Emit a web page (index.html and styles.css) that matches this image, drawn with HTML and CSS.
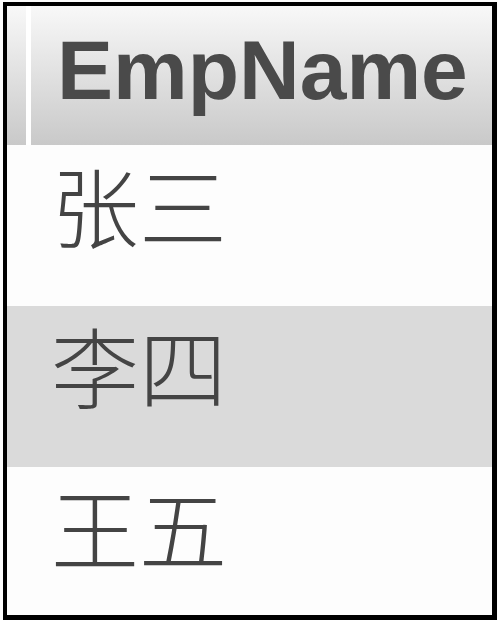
FILE: index.html
```html
<!DOCTYPE html>
<html lang="zh-CN">
<head>
  <meta charset="UTF-8">
  <title>EmpName</title>
  <link rel="stylesheet" href="styles.css">
</head>
<body>
  <div class="grid">
    <div class="head">
      <div class="corner"></div>
      <div class="col-title">EmpName</div>
    </div>
    <div class="row">张三</div>
    <div class="row alt">李四</div>
    <div class="row">王五</div>
  </div>
</body>
</html>
```

FILE: styles.css
```css
body {
  margin: 0;
  background: #fdfdfd;
}
.grid {
  margin: 2px 0 0 3px;
  width: 485px;
  height: 609px;
  border-style: solid;
  border-color: #000;
  border-width: 4px 5px 5px 4px;
  background: #fdfdfd;
  overflow: hidden;
}
.head {
  display: flex;
  height: 139px;
  background: #fff;
  gap: 5px;
}
.corner,
.col-title {
  background: linear-gradient(#f8f8f8, #c9c9c9);
}
.corner {
  width: 19px;
}
.col-title {
  flex: 1;
  box-sizing: border-box;
  padding: 22px 0 0 26px;
  font-family: "Liberation Sans", Arial, sans-serif;
  font-weight: bold;
  font-size: 84px;
  line-height: 84px;
  color: #4a4a4a;
}
.row {
  box-sizing: border-box;
  height: 161px;
  padding: 14px 0 0 44px;
  font-family: "Noto Sans CJK SC", sans-serif;
  font-weight: 300;
  font-size: 88px;
  line-height: 88px;
  color: #444;
}
.alt {
  background: #dadada;
}
```
